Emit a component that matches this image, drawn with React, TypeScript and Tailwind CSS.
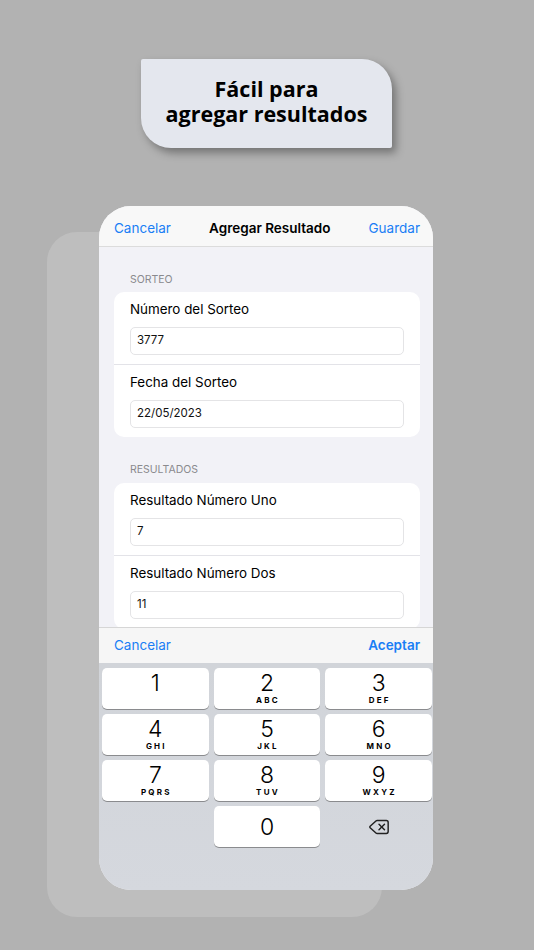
import { Delete } from "lucide-react";

const sf = { fontFamily: "Inter, 'Noto Sans', 'Liberation Sans', sans-serif" };

const keys = [
  { d: "1", l: "" },
  { d: "2", l: "ABC" },
  { d: "3", l: "DEF" },
  { d: "4", l: "GHI" },
  { d: "5", l: "JKL" },
  { d: "6", l: "MNO" },
  { d: "7", l: "PQRS" },
  { d: "8", l: "TUV" },
  { d: "9", l: "WXYZ" },
];

const Field = ({ label, value, divider }: { label: string; value: string; divider?: boolean }) => (
  <div className={divider ? "pl-4 border-b border-[#e3e3e8]" : "pl-4"}>
    <div className="pr-4 pt-[8px] pb-[9px]">
      <div className="h-[18px] leading-[18px] text-[13.4px] text-black">{label}</div>
      <div className="mt-[9px] h-[28px] rounded-[5px] border border-[#e4e4e6] bg-white flex items-center px-[6px] text-[11.5px] text-[#111]">
        {value}
      </div>
    </div>
  </div>
);

const App = () => {
  return (
    <div className="w-[534px] h-[950px] bg-[#b2b2b2] overflow-hidden pt-[59px]" style={sf}>
      {/* Banner */}
      <div className="ml-[141px] w-[251px] h-[89px] bg-[#e4e7ee] rounded-tr-[30px] rounded-bl-[30px] rounded-tl-[2px] rounded-br-[2px] shadow-[4px_5px_8px_rgba(0,0,0,0.35)] flex flex-col items-center justify-center pb-[5px]">
        <div
          className="text-[21.5px] font-bold leading-[25px] text-black text-center"
          style={{ fontFamily: "'Open Sans', 'Noto Sans', sans-serif" }}
        >
          Fácil para
          <br />
          agregar resultados
        </div>
      </div>

      {/* Phone */}
      <div className="relative ml-[99px] mt-[58px] w-[334px] h-[684px]">
        <div className="absolute left-[-52px] top-[26px] w-[335px] h-[685px] rounded-[30px] bg-[#bebebe]" />
        <div className="relative w-full h-full rounded-[32px] overflow-hidden bg-[#f2f2f7] flex flex-col">
          {/* Nav bar */}
          <div className="h-[41px] shrink-0 bg-[#f8f8f8] border-b border-[#dcdcdc] flex items-center justify-between pl-[15px] pr-[13px] pt-[4px]">
            <span className="text-[13.5px] text-[#1a7ef5]">Cancelar</span>
            <span className="text-[13.5px] font-semibold text-black">Agregar Resultado</span>
            <span className="text-[13.5px] text-[#1a7ef5]">Guardar</span>
          </div>

          {/* Form */}
          <div className="flex-1 overflow-hidden pl-[15px] pr-[13px] pt-[26px]">
            <div className="pl-4 h-[14px] leading-[14px] text-[10.5px] text-[#8a8a8e]">SORTEO</div>
            <div className="mt-[5px] bg-white rounded-[10px]">
              <Field label="Número del Sorteo" value="3777" divider />
              <Field label="Fecha del Sorteo" value="22/05/2023" />
            </div>
            <div className="mt-[26px] pl-4 h-[14px] leading-[14px] text-[10.5px] text-[#8a8a8e]">RESULTADOS</div>
            <div className="mt-[6px] bg-white rounded-[10px]">
              <Field label="Resultado Número Uno" value="7" divider />
              <Field label="Resultado Número Dos" value="11" divider />
            </div>
          </div>

          {/* Toolbar */}
          <div className="h-[36px] shrink-0 bg-[#f6f6f6] border-t border-[#d6d6d6] flex items-center justify-between pl-[15px] pr-[13px]">
            <span className="text-[13.5px] text-[#1a7ef5]">Cancelar</span>
            <span className="text-[13.5px] font-semibold text-[#1a7ef5]">Aceptar</span>
          </div>

          {/* Keypad */}
          <div className="h-[227px] shrink-0 bg-gradient-to-b from-[#d1d4d9] to-[#d5d8de] pt-[5px] pl-[3px] pr-[1px]">
            <div className="grid grid-cols-3 gap-[5px]">
              {keys.map((k) => (
                <div
                  key={k.d}
                  className="h-[41px] bg-white rounded-[5px] shadow-[0_1px_0_#8a8b8e] flex flex-col items-center pt-[3px]"
                >
                  <span className="text-[23px] leading-[24px] font-light text-black">{k.d}</span>
                  <span className="text-[8px] leading-[10px] font-bold tracking-[2.2px] pl-[2px] text-black">{k.l}</span>
                </div>
              ))}
              <div />
              <div className="h-[41px] bg-white rounded-[5px] shadow-[0_1px_0_#8a8b8e] flex items-center justify-center">
                <span className="text-[23px] leading-[24px] font-light text-black">0</span>
              </div>
              <div className="h-[41px] flex items-center justify-center">
                <Delete className="w-[22px] h-[22px] text-[#222]" strokeWidth={1.6} />
              </div>
            </div>
          </div>
        </div>
      </div>
    </div>
  );
};

export default App;
